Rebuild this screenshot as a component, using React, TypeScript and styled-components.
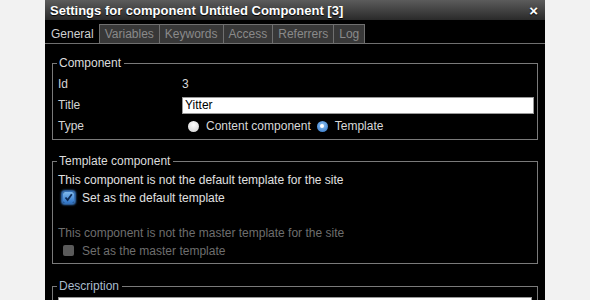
import React from "react";
import styled, { createGlobalStyle } from "styled-components";

const Global = createGlobalStyle`
  html, body { margin: 0; padding: 0; background: #f2f2f2; }
  body { font-family: "Liberation Sans", Arial, sans-serif; font-size: 12px; }
`;

const Dialog = styled.div`
  margin-left: 45px;
  width: 500px;
  height: 300px;
  background: #000;
  overflow: hidden;
`;

const TitleBar = styled.div`
  height: 20px;
  display: flex;
  align-items: center;
  justify-content: space-between;
  padding: 0 7px 0 5px;
  background: linear-gradient(#5c5c5c, #2a2a2a);
  color: #fff;
  font-size: 13px;
  font-weight: bold;
  text-shadow: 0 1px 1px #000;
`;

const Close = styled.span`
  font-size: 15px;
  font-weight: bold;
  line-height: 1;
`;

const TabBar = styled.div`
  display: flex;
  align-items: flex-end;
  padding-top: 4px;
  border-bottom: 1px solid #6f6f6f;
  height: 19px;
`;

const Tab = styled.div<{ $active?: boolean }>`
  padding: 0 5px;
  height: 18px;
  line-height: 18px;
  font-size: 12px;
  color: ${(p) => (p.$active ? "#cfcfcf" : "#8a8a8a")};
  background: ${(p) => (p.$active ? "#000" : "#383838")};
  border: 1px solid ${(p) => (p.$active ? "#000" : "#6f6f6f")};
  border-bottom: none;
  margin-right: -1px;
`;

const Body = styled.div`
  padding: 0 7px;
  display: flex;
  flex-direction: column;
`;

const Group = styled.fieldset<{ $top: number; $bottom: number }>`
  margin: ${(p) => p.$top}px 0 0 0;
  padding: 4px 5px ${(p) => p.$bottom}px 5px;
  border: 1px solid #7a7a7a;
  min-width: 0;
`;

const Legend = styled.legend<{ $tint?: boolean }>`
  padding: 0 3px 0 2px;
  margin-left: -1px;
  font-size: 12px;
  line-height: 14px;
  color: ${(p) => (p.$tint ? "#a9bccd" : "#dcdcdc")};
`;

const Grid = styled.div`
  display: grid;
  grid-template-columns: 124px 1fr;
  grid-auto-rows: 20px;
  row-gap: 1px;
  align-items: center;
  color: #d8d8d8;
`;

const Label = styled.span`
  color: #d4d4d4;
`;

const TextInput = styled.input`
  box-sizing: border-box;
  height: 17px;
  width: calc(100% + 2px);
  border: 1px solid #999;
  background: #fff;
  color: #000;
  font-family: "Liberation Sans", Arial, sans-serif;
  font-size: 12px;
  padding: 0 2px;
  outline: none;
`;

const RadioRow = styled.div`
  display: flex;
  align-items: center;
  padding-left: 6px;
  color: #d8d8d8;
`;

const Radio = styled.span<{ $on?: boolean }>`
  width: 11px;
  height: 11px;
  border-radius: 50%;
  margin-right: 7px;
  box-sizing: border-box;
  display: inline-flex;
  align-items: center;
  justify-content: center;
  background: ${(p) =>
    p.$on
      ? "radial-gradient(circle at 50% 40%, #8fc4f2, #2b6fc4)"
      : "radial-gradient(circle at 50% 35%, #ffffff, #cfcfcf)"};
  &::after {
    content: "";
    display: ${(p) => (p.$on ? "block" : "none")};
    width: 4px;
    height: 4px;
    border-radius: 50%;
    background: #fff;
  }
`;

const RadioText = styled.span`
  margin-right: 6px;
`;

const Line = styled.div<{ $muted?: boolean }>`
  height: 17px;
  line-height: 17px;
  color: ${(p) => (p.$muted ? "#6e6e6e" : "#e0e0e0")};
`;

const CheckRow = styled.div<{ $muted?: boolean }>`
  display: flex;
  align-items: center;
  height: 17px;
  padding-left: 5px;
  color: ${(p) => (p.$muted ? "#6e6e6e" : "#e0e0e0")};
`;

const Box = styled.span<{ $on?: boolean }>`
  width: 11px;
  height: 11px;
  border-radius: 2px;
  margin-right: 8px;
  display: inline-flex;
  align-items: center;
  justify-content: center;
  background: ${(p) =>
    p.$on ? "linear-gradient(#7fb9ee, #2f74c7)" : "#5a5a5a"};
  box-shadow: ${(p) => (p.$on ? "0 0 2px 2px #3a78c2" : "none")};
`;

const Spacer = styled.div`
  height: 19px;
`;

const TextArea = styled.div`
  height: 40px;
  background: #fff;
  border: 1px solid #999;
`;

export default function App() {
  return (
    <>
      <Global />
      <Dialog>
        <TitleBar>
          <span>Settings for component Untitled Component [3]</span>
          <Close>×</Close>
        </TitleBar>
        <TabBar>
          <Tab $active>General</Tab>
          <Tab>Variables</Tab>
          <Tab>Keywords</Tab>
          <Tab>Access</Tab>
          <Tab>Referrers</Tab>
          <Tab>Log</Tab>
        </TabBar>
        <Body>
          <Group $top={12} $bottom={3}>
            <Legend>Component</Legend>
            <Grid>
              <Label>Id</Label>
              <span>3</span>
              <Label>Title</Label>
              <TextInput defaultValue="Yitter" />
              <Label>Type</Label>
              <RadioRow>
                <Radio />
                <RadioText>Content component</RadioText>
                <Radio $on />
                <RadioText>Template</RadioText>
              </RadioRow>
            </Grid>
          </Group>
          <Group $top={14} $bottom={4}>
            <Legend>Template component</Legend>
            <Line>This component is not the default template for the site</Line>
            <CheckRow>
              <Box $on>
                <svg width="9" height="9" viewBox="0 0 9 9">
                  <path d="M1.5 4.5 L3.6 7 L7.8 1.2" fill="none" stroke="#0d2a55" strokeWidth="1.8" />
                </svg>
              </Box>
              Set as the default template
            </CheckRow>
            <Spacer />
            <Line $muted>This component is not the master template for the site</Line>
            <CheckRow $muted>
              <Box />
              Set as the master template
            </CheckRow>
          </Group>
          <Group $top={15} $bottom={3}>
            <Legend $tint>Description</Legend>
            <TextArea />
          </Group>
        </Body>
      </Dialog>
    </>
  );
}
